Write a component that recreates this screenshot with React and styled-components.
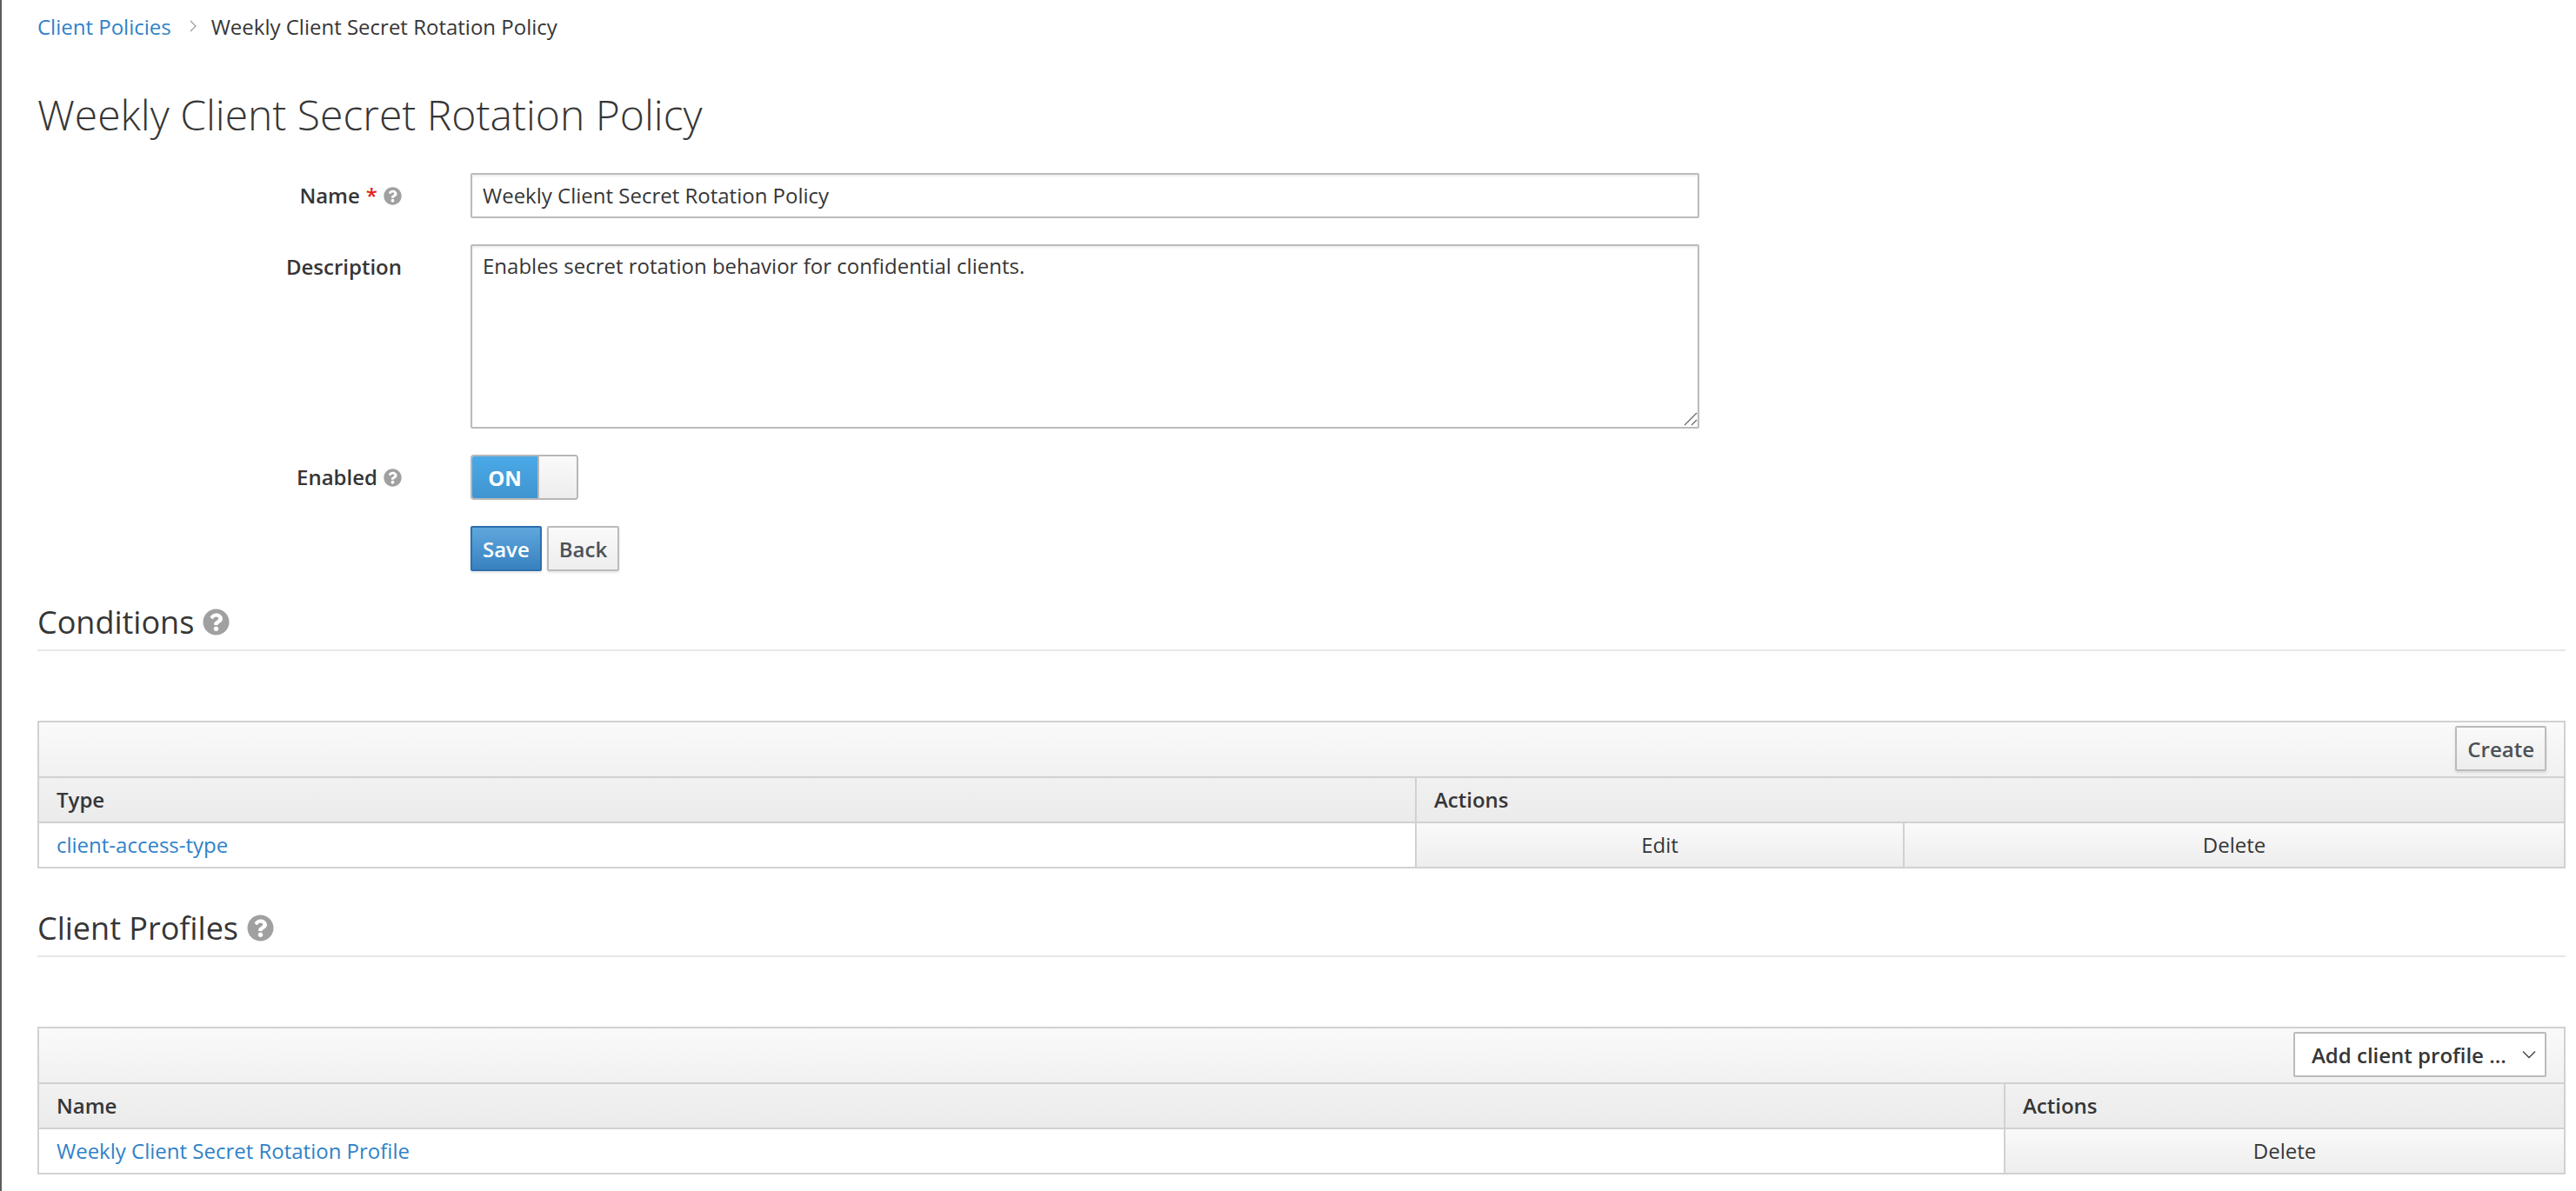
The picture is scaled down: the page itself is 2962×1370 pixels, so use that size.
import React from "react";
import styled, { createGlobalStyle } from "styled-components";
import { FaQuestionCircle } from "react-icons/fa";

const GlobalStyle = createGlobalStyle`
  html, body {
    margin: 0;
    padding: 0;
    background: #fff;
  }
  body {
    font-family: "Open Sans", "Liberation Sans", sans-serif;
    font-size: 24px;
    color: #363636;
  }
  * {
    box-sizing: border-box;
  }
`;

export default function App() {
  return (
    <Page>
      <GlobalStyle />
      <Breadcrumb>
        <CrumbLink href="#">Client Policies</CrumbLink>
        <CrumbArrow viewBox="0 0 8 16">
          <path d="M1 2l6 6-6 6" fill="none" stroke="#9a9a9a" strokeWidth="1.2" />
        </CrumbArrow>
        <span>Weekly Client Secret Rotation Policy</span>
      </Breadcrumb>
      <PageTitle>Weekly Client Secret Rotation Policy</PageTitle>

      {/* 폼 */}
      <FormBody>
        <FormRow>
          <FormLabel>
            Name
            <Required>*</Required>
            <LabelHelp />
          </FormLabel>
          <TextInput defaultValue="Weekly Client Secret Rotation Policy" />
        </FormRow>
        <FormRow>
          <FormLabel top>Description</FormLabel>
          <TextAreaWrap>
            <TextArea defaultValue="Enables secret rotation behavior for confidential clients." />
            <ResizeGrip viewBox="0 0 16 16">
              <path d="M1 15L15 1M9 15l6-6" fill="none" stroke="#6b6b6b" strokeWidth="1.3" />
            </ResizeGrip>
          </TextAreaWrap>
        </FormRow>
        <FormRow>
          <FormLabel>
            Enabled
            <LabelHelp />
          </FormLabel>
          <Toggle>
            <ToggleOn>ON</ToggleOn>
            <ToggleHandle />
          </Toggle>
        </FormRow>
        <FormRow>
          <FormLabel />
          <ButtonGroup>
            <PrimaryButton>Save</PrimaryButton>
            <Button>Back</Button>
          </ButtonGroup>
        </FormRow>
      </FormBody>

      {/* 조건 */}
      <SectionTitle first>
        Conditions <SectionHelp />
      </SectionTitle>
      <Table>
        <colgroup>
          <col />
          <col width="561" />
          <col width="760" />
        </colgroup>
        <thead>
          <tr>
            <ToolbarCell colSpan={3}>
              <ToolbarInner>
                <Button>Create</Button>
              </ToolbarInner>
            </ToolbarCell>
          </tr>
          <tr>
            <HeadCell>Type</HeadCell>
            <HeadCell colSpan={2}>Actions</HeadCell>
          </tr>
        </thead>
        <tbody>
          <tr>
            <BodyCell>
              <CellLink href="#">client-access-type</CellLink>
            </BodyCell>
            <ActionCell>Edit</ActionCell>
            <ActionCell>Delete</ActionCell>
          </tr>
        </tbody>
      </Table>

      {/* 클라이언트 프로필 */}
      <SectionTitle>
        Client Profiles <SectionHelp />
      </SectionTitle>
      <Table>
        <colgroup>
          <col />
          <col width="644" />
        </colgroup>
        <thead>
          <tr>
            <ToolbarCell colSpan={2}>
              <ToolbarInner>
                <SelectBox>
                  Add client profile ...
                  <SelectArrow viewBox="0 0 16 10">
                    <path d="M1 1.5l7 7 7-7" fill="none" stroke="#444" strokeWidth="1.4" />
                  </SelectArrow>
                </SelectBox>
              </ToolbarInner>
            </ToolbarCell>
          </tr>
          <tr>
            <HeadCell>Name</HeadCell>
            <HeadCell>Actions</HeadCell>
          </tr>
        </thead>
        <tbody>
          <tr>
            <BodyCell>
              <CellLink href="#">Weekly Client Secret Rotation Profile</CellLink>
            </BodyCell>
            <ActionCell>Delete</ActionCell>
          </tr>
        </tbody>
      </Table>
    </Page>
  );
}

const Page = styled.div`
  width: 2962px;
  height: 1370px;
  overflow: hidden;
  padding: 0 12px 0 41px;
  border-left: 2px solid #5c5c5c;
`;

const Breadcrumb = styled.div`
  display: flex;
  align-items: center;
  height: 60px;
`;

const CrumbLink = styled.a`
  color: #2f82c8;
  text-decoration: none;
`;

const CrumbArrow = styled.svg`
  width: 8px;
  height: 16px;
  margin: 0 17px 0 21px;
`;

const PageTitle = styled.h1`
  margin: 42px 0 37px;
  font-size: 48px;
  font-weight: 300;
  line-height: 60px;
  color: #363636;
`;

const FormBody = styled.div`
  display: flex;
  flex-direction: column;
  gap: 30px;
`;

const FormRow = styled.div`
  display: flex;
`;

const FormLabel = styled.label`
  display: flex;
  justify-content: flex-end;
  align-items: ${(props) => (props.top ? "flex-start" : "center")};
  gap: 7px;
  width: 419px;
  margin-right: 79px;
  height: ${(props) => (props.top ? "auto" : "52px")};
  padding-top: ${(props) => (props.top ? "8px" : "0")};
  font-weight: 600;
  line-height: 36px;
`;

const Required = styled.span`
  color: #e2231a;
`;

const LabelHelp = styled(FaQuestionCircle)`
  width: 21px;
  height: 21px;
  color: #a0a0a0;
`;

const TextInput = styled.input`
  width: 1413px;
  height: 52px;
  padding: 0 12px 1px;
  border: 2px solid #bbb;
  border-radius: 2px;
  box-shadow: inset 0 2px 3px rgba(3, 3, 3, 0.07);
  font: inherit;
  color: inherit;
  outline: none;
`;

const TextAreaWrap = styled.div`
  position: relative;
  width: 1413px;
  height: 212px;
`;

const TextArea = styled.textarea`
  display: block;
  width: 100%;
  height: 100%;
  padding: 6px 12px;
  border: 2px solid #bbb;
  border-radius: 2px;
  box-shadow: inset 0 2px 3px rgba(3, 3, 3, 0.07);
  font: inherit;
  color: inherit;
  line-height: 34px;
  outline: none;
  resize: none;
`;

const ResizeGrip = styled.svg`
  position: absolute;
  right: 2px;
  bottom: 3px;
  width: 16px;
  height: 16px;
`;

const Toggle = styled.div`
  display: flex;
  width: 124px;
  height: 52px;
  border: 2px solid #b7b7b7;
  border-radius: 4px;
  overflow: hidden;
`;

const ToggleOn = styled.div`
  display: flex;
  align-items: center;
  justify-content: center;
  width: 75px;
  background: linear-gradient(#4aa9e7, #4095cf);
  color: #fff;
  font-weight: 700;
`;

const ToggleHandle = styled.div`
  flex: 1;
  border-left: 2px solid #b7b7b7;
  background: linear-gradient(#fafafa, #ededed);
`;

const ButtonGroup = styled.div`
  display: flex;
  gap: 6px;
`;

const Button = styled.button`
  height: 52px;
  padding: 0 12px;
  border: 2px solid #bbb;
  border-radius: 2px;
  background: linear-gradient(#fafafa, #ededed);
  box-shadow: 0 2px 3px rgba(3, 3, 3, 0.1);
  font: inherit;
  font-weight: 600;
  color: #4d5258;
`;

const PrimaryButton = styled(Button)`
  border-color: #2d6fae;
  background: linear-gradient(#5fa7dd, #3881bf);
  color: #fff;
`;

const SectionTitle = styled.h2`
  display: flex;
  align-items: center;
  gap: 10px;
  height: 62px;
  padding-bottom: 4px;
  margin: ${(props) => (props.first ? "30px" : "40px")} 0 80px;
  border-bottom: 2px solid #e7e7e7;
  font-size: 36px;
  font-weight: 400;
  color: #363636;
`;

const SectionHelp = styled(FaQuestionCircle)`
  width: 31px;
  height: 31px;
  color: #a0a0a0;
`;

const Table = styled.table`
  width: 100%;
  table-layout: fixed;
  border-collapse: collapse;
  border: 2px solid #d1d1d1;
`;

const ToolbarCell = styled.th`
  height: 64px;
  padding: 0;
  border-bottom: 2px solid #d1d1d1;
  background: linear-gradient(#fafafa, #f1f1f1);
  font-weight: 400;
`;

const ToolbarInner = styled.div`
  display: flex;
  justify-content: flex-end;
  padding-right: 20px;
  margin-top: -2px;
`;

const SelectBox = styled.div`
  display: flex;
  align-items: center;
  justify-content: space-between;
  width: 291px;
  height: 52px;
  padding: 0 10px 0 19px;
  background: #fff;
  border: 2px solid #bbb;
  border-radius: 2px;
  font-weight: 600;
`;

const SelectArrow = styled.svg`
  width: 16px;
  height: 10px;
`;

const HeadCell = styled.th`
  height: 52px;
  padding: 0 20px 2px;
  border: 2px solid #d1d1d1;
  background: linear-gradient(#f1f1f1, #ebebeb);
  font-weight: 600;
  text-align: left;
`;

const BodyCell = styled.td`
  height: 52px;
  padding: 0 20px 2px;
  border: 2px solid #d1d1d1;
`;

const CellLink = styled.a`
  color: #2f82c8;
  text-decoration: none;
`;

const ActionCell = styled.td`
  height: 52px;
  padding-bottom: 2px;
  border: 2px solid #d1d1d1;
  background: linear-gradient(#fafafa, #ededed);
  text-align: center;
`;
